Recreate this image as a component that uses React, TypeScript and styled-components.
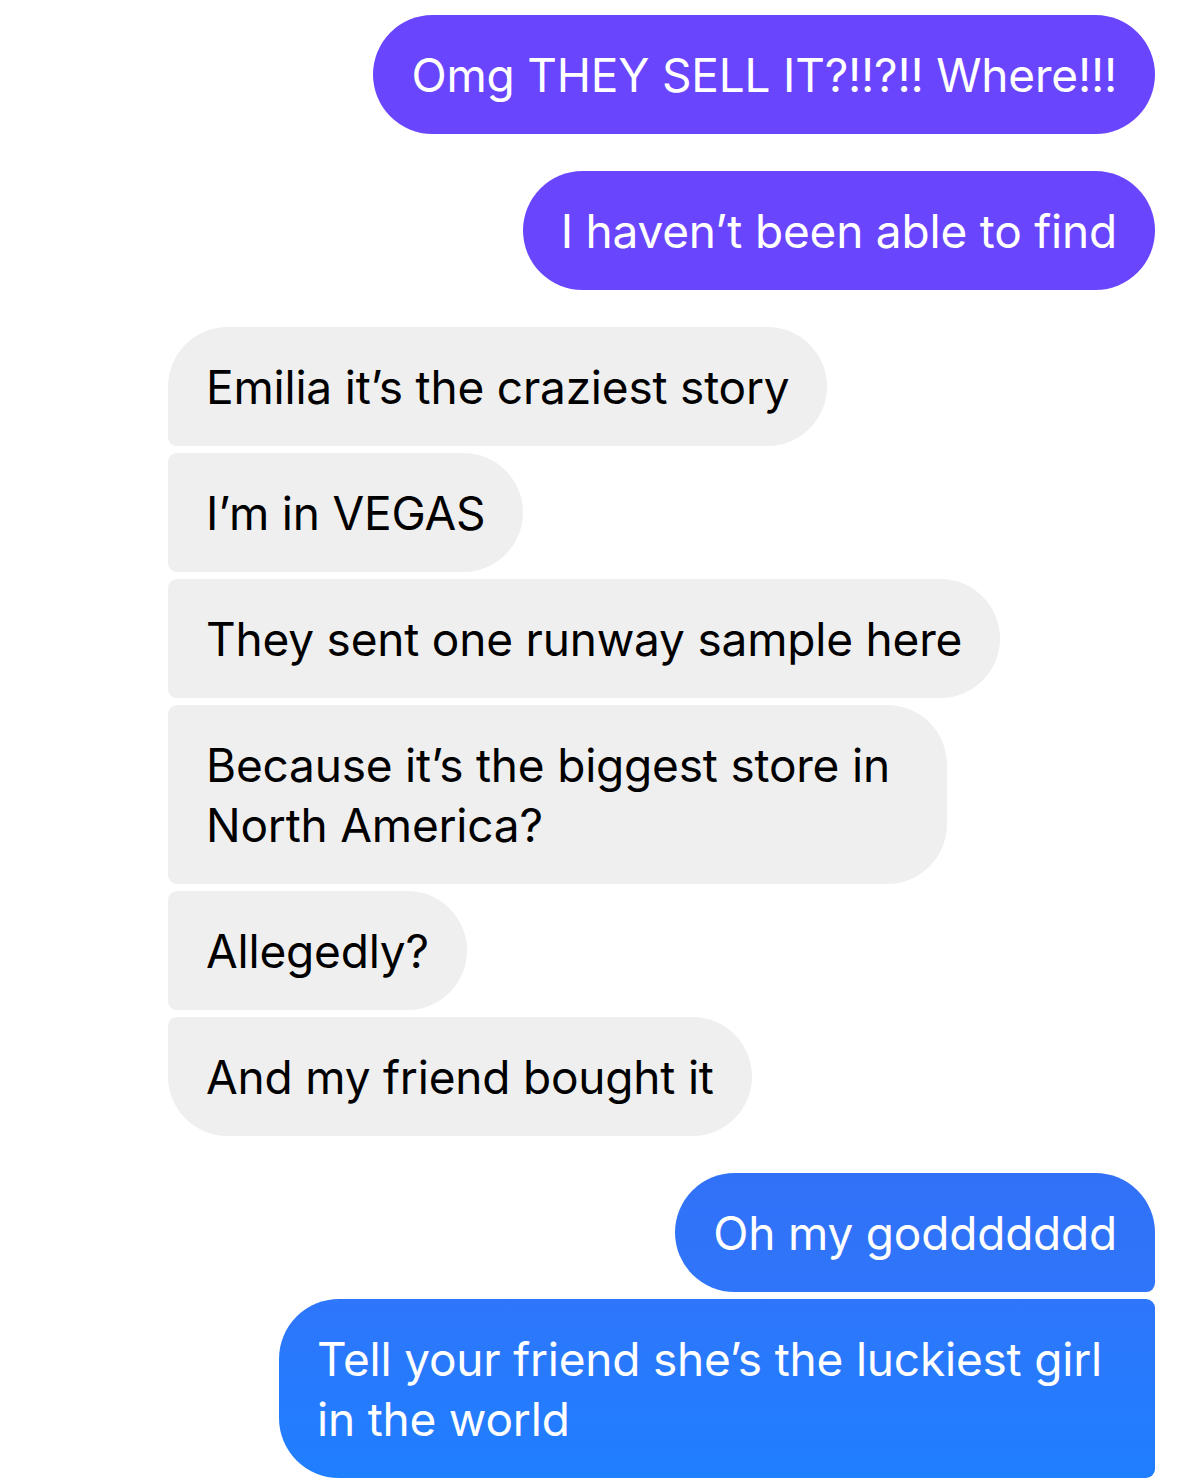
import React from "react";
import styled, { createGlobalStyle, css } from "styled-components";

const Global = createGlobalStyle`
  html, body { margin: 0; padding: 0; background: #ffffff; }
  body { font-family: Inter, "Noto Sans", "Liberation Sans", sans-serif; }
`;

type Kind = "purple" | "blue" | "gray";
type Corner = "single" | "first" | "middle" | "last";

const Thread = styled.div`
  display: flex;
  flex-direction: column;
  gap: 37px;
  padding: 15px 24px 0 168px;
  width: 1179px;
  box-sizing: border-box;
`;

const Group = styled.div<{ $mine: boolean }>`
  display: flex;
  flex-direction: column;
  align-items: ${(p) => (p.$mine ? "flex-end" : "flex-start")};
  gap: 7px;
`;

const big = 60;
const small = 9;

const radius = (mine: boolean, c: Corner) => {
  const top = c === "single" || c === "first" ? big : small;
  const bottom = c === "single" || c === "last" ? big : small;
  return mine
    ? `${big}px ${top}px ${bottom}px ${big}px`
    : `${top}px ${big}px ${big}px ${bottom}px`;
};

const backgrounds: Record<Kind, ReturnType<typeof css>> = {
  purple: css`
    background: #6a45fe;
    color: #ffffff;
  `,
  blue: css`
    background: linear-gradient(180deg, #3170f9 0%, #2e76fb 100%);
    color: #ffffff;
  `,
  gray: css`
    background: #efefef;
    color: #000000;
  `,
};

const Bubble = styled.div<{
  $kind: Kind;
  $mine: boolean;
  $corner: Corner;
  $grad?: string;
  $wrapWidth?: number;
}>`
  box-sizing: border-box;
  display: flex;
  flex-direction: column;
  padding: 29.5px 38px 29.5px 38px;
  font-size: 46px;
  line-height: 60px;
  letter-spacing: -0.2px;
  white-space: nowrap;
  border-radius: ${(p) => radius(p.$mine, p.$corner)};
  ${(p) => backgrounds[p.$kind]}
  ${(p) => p.$grad && css`background: ${p.$grad};`}
  ${(p) => p.$wrapWidth && css`width: ${p.$wrapWidth}px;`}
`;

const Line = styled.span`
  display: block;
`;

type Msg = { lines: string[]; corner: Corner; grad?: string; width?: number };
type G = { mine: boolean; kind: Kind; msgs: Msg[] };

const groups: G[] = [
  { mine: true, kind: "purple", msgs: [{ lines: ["Omg THEY SELL IT?!!?!! Where!!!"], corner: "single" }] },
  { mine: true, kind: "purple", msgs: [{ lines: ["I haven\u2019t been able to find"], corner: "single" }] },
  {
    mine: false,
    kind: "gray",
    msgs: [
      { lines: ["Emilia it\u2019s the craziest story"], corner: "first" },
      { lines: ["I\u2019m in VEGAS"], corner: "middle" },
      { lines: ["They sent one runway sample here"], corner: "middle" },
      { lines: ["Because it\u2019s the biggest store in", "North America?"], corner: "middle", width: 779 },
      { lines: ["Allegedly?"], corner: "middle" },
      { lines: ["And my friend bought it"], corner: "last" },
    ],
  },
  {
    mine: true,
    kind: "blue",
    msgs: [
      { lines: ["Oh my goddddddd"], corner: "first", grad: "linear-gradient(180deg, #3171f8 0%, #2f75fa 100%)" },
      {
        lines: ["Tell your friend she\u2019s the luckiest girl", "in the world"],
        corner: "middle",
        width: 876,
        grad: "linear-gradient(180deg, #2e76fb 0%, #1f7fff 100%)",
      },
    ],
  },
];

export default function App() {
  return (
    <>
      <Global />
      <Thread>
        {groups.map((g, i) => (
          <Group key={i} $mine={g.mine}>
            {g.msgs.map((m, j) => (
              <Bubble
                key={j}
                $kind={g.kind}
                $mine={g.mine}
                $corner={m.corner}
                $grad={m.grad}
                $wrapWidth={m.width}
              >
                {m.lines.map((l, k) => (
                  <Line key={k}>{l}</Line>
                ))}
              </Bubble>
            ))}
          </Group>
        ))}
      </Thread>
    </>
  );
}
